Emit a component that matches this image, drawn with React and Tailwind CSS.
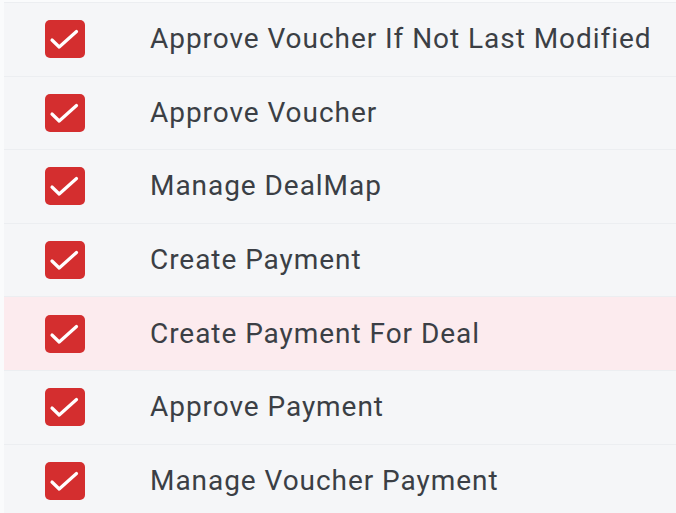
import React from "react";

const rows = [
  { label: "Approve Voucher If Not Last Modified" },
  { label: "Approve Voucher" },
  { label: "Manage DealMap" },
  { label: "Create Payment" },
  { label: "Create Payment For Deal", hl: true },
  { label: "Approve Payment" },
  { label: "Manage Voucher Payment" },
];

function Check() {
  return (
    <div className="w-[40px] h-[38px] rounded-[5px] bg-[#d42e2f] shrink-0">
      <svg width="40" height="38" viewBox="0 0 40 38" fill="none">
        <path d="M7 20 L14.2 27 L31.5 11.5" stroke="white" strokeWidth="3.2" strokeLinecap="round" strokeLinejoin="round" />
      </svg>
    </div>
  );
}

export default function App() {
  return (
    <div className="w-[676px] h-[513px] overflow-hidden bg-[#fafbfc] pt-[2px] pl-[4px]" style={{ fontFamily: "Roboto, 'Noto Sans', sans-serif" }}>
      <div className="border-t border-[#eceef1]">
        {rows.map((r, i) => (
          <div
            key={i}
            className={`h-[73.6px] border-b border-[#eceef1] flex items-center ${r.hl ? "bg-[#fcebee]" : "bg-[#f5f6f8]"}`}
          >
            <div className="w-[146px] pl-[41px] shrink-0">
              <Check />
            </div>
            <span className="text-[28px] text-[#3b3f45] leading-none tracking-[0.95px] whitespace-nowrap">{r.label}</span>
          </div>
        ))}
      </div>
    </div>
  );
}
